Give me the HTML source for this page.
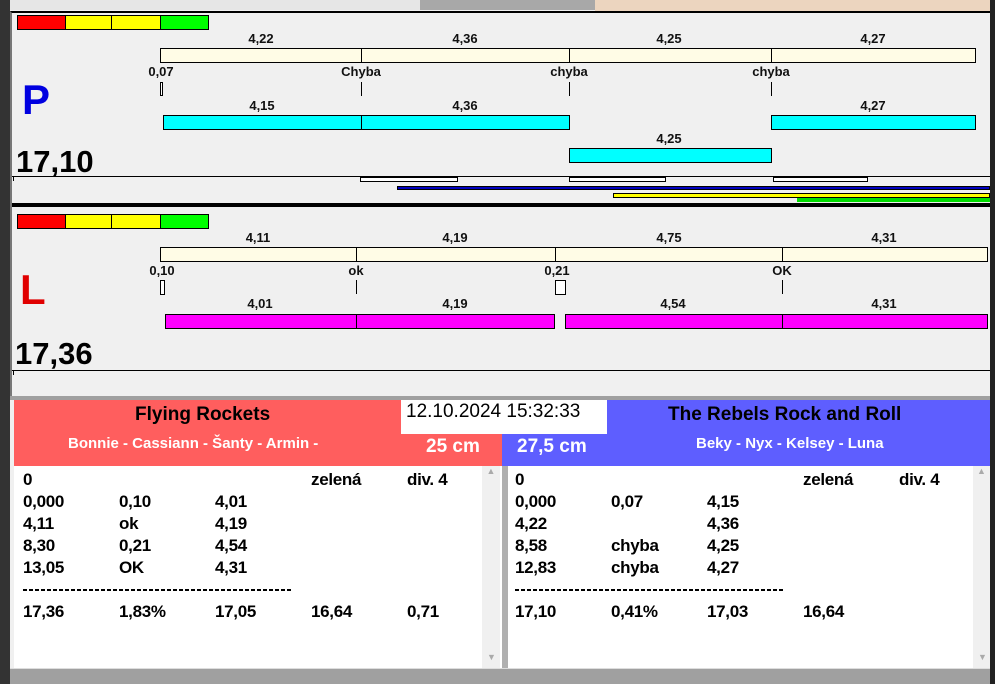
<!DOCTYPE html><html><head><style>
body{margin:0;width:995px;height:684px;overflow:hidden;background:#f0f0f0;font-family:"Liberation Sans",Arial,sans-serif;position:relative}
div{position:absolute;box-sizing:border-box}
.t{font-weight:bold;font-size:13px;color:#111;transform:translateX(-50%);white-space:nowrap}
.cr{background:#fffce6;border:1px solid #000;height:15px}
.cy{background:#00ffff;border:1px solid #000;height:15px}
.mg{background:#ff00ff;border:1px solid #000;height:15px}
.vl{width:1px;background:#000}
.r{font-weight:bold;font-size:17px;color:#000;white-space:nowrap;letter-spacing:-0.3px}
.dash{height:2px;background:repeating-linear-gradient(90deg,#000 0 4px,transparent 4px 6px)}
</style></head><body>
<div style="left:0;top:0;width:595px;height:10px;background:#a8a8a8"></div>
<div style="left:0;top:0;width:420px;height:10px;background:#e6e6e6"></div>
<div style="left:595px;top:0;width:395px;height:11px;background:#ecd5bf"></div>
<div style="left:990px;top:0;width:5px;height:684px;background:#222"></div>
<div style="left:0;top:0;width:10px;height:684px;background:#333"></div>
<div style="left:10px;top:11px;width:980px;height:389px;background:#f0f0f0;border-top:2px solid #000;border-left:2px solid #777"></div>
<!-- P panel -->
<div style="left:17px;top:15px;width:49px;height:15px;background:#f00;border:1px solid #000"></div>
<div style="left:65px;top:15px;width:47px;height:15px;background:#ff0;border:1px solid #000"></div>
<div style="left:111px;top:15px;width:50px;height:15px;background:#ff0;border:1px solid #000"></div>
<div style="left:160px;top:15px;width:49px;height:15px;background:#0f0;border:1px solid #000"></div>
<div class="t" style="left:261px;top:31px">4,22</div><div class="t" style="left:465px;top:31px">4,36</div><div class="t" style="left:669px;top:31px">4,25</div><div class="t" style="left:873px;top:31px">4,27</div>
<div class="cr" style="left:160px;top:48px;width:816px"></div>
<div class="vl" style="left:361px;top:48px;height:15px"></div><div class="vl" style="left:569px;top:48px;height:15px"></div><div class="vl" style="left:771px;top:48px;height:15px"></div>
<div class="t" style="left:161px;top:64px">0,07</div><div class="t" style="left:361px;top:64px">Chyba</div><div class="t" style="left:569px;top:64px">chyba</div><div class="t" style="left:771px;top:64px">chyba</div>
<div style="left:160px;top:82px;width:3px;height:14px;border:1px solid #000;background:#fff"></div>
<div class="vl" style="left:361px;top:82px;height:14px"></div><div class="vl" style="left:569px;top:82px;height:14px"></div><div class="vl" style="left:771px;top:82px;height:14px"></div>
<div style="left:22px;top:76px;font-size:42px;font-weight:bold;color:#0000e0">P</div>
<div class="t" style="left:262px;top:98px">4,15</div><div class="t" style="left:465px;top:98px">4,36</div><div class="t" style="left:873px;top:98px">4,27</div>
<div class="cy" style="left:163px;top:115px;width:407px"></div><div class="vl" style="left:361px;top:115px;height:15px"></div>
<div class="cy" style="left:771px;top:115px;width:205px"></div>
<div class="t" style="left:669px;top:131px">4,25</div>
<div class="cy" style="left:569px;top:148px;width:203px"></div>
<div style="left:16px;top:143px;font-size:31px;font-weight:bold;color:#000;line-height:38px">17,10</div>
<div style="left:12px;top:176px;width:978px;height:1px;background:#000"></div>
<div style="left:13px;top:176px;width:1px;height:5px;background:#000"></div>
<div style="left:360px;top:177px;width:98px;height:5px;border:1px solid #000;background:#fff"></div>
<div style="left:569px;top:177px;width:97px;height:5px;border:1px solid #000;background:#fff"></div>
<div style="left:773px;top:177px;width:95px;height:5px;border:1px solid #000;background:#fff"></div>
<div style="left:397px;top:186px;width:593px;height:4px;background:#0000c0;border:1px solid #000"></div>
<div style="left:613px;top:193px;width:377px;height:5px;background:#ff0;border:1px solid #000"></div>
<div style="left:797px;top:198px;width:193px;height:4px;background:#0d0"></div>
<div style="left:12px;top:203px;width:978px;height:4px;background:#000"></div>
<!-- L panel -->
<div style="left:17px;top:214px;width:49px;height:15px;background:#f00;border:1px solid #000"></div>
<div style="left:65px;top:214px;width:47px;height:15px;background:#ff0;border:1px solid #000"></div>
<div style="left:111px;top:214px;width:50px;height:15px;background:#ff0;border:1px solid #000"></div>
<div style="left:160px;top:214px;width:49px;height:15px;background:#0f0;border:1px solid #000"></div>
<div class="t" style="left:258px;top:230px">4,11</div><div class="t" style="left:455px;top:230px">4,19</div><div class="t" style="left:669px;top:230px">4,75</div><div class="t" style="left:884px;top:230px">4,31</div>
<div class="cr" style="left:160px;top:247px;width:828px"></div>
<div class="vl" style="left:356px;top:247px;height:15px"></div><div class="vl" style="left:555px;top:247px;height:15px"></div><div class="vl" style="left:782px;top:247px;height:15px"></div>
<div class="t" style="left:162px;top:263px">0,10</div><div class="t" style="left:356px;top:263px">ok</div><div class="t" style="left:557px;top:263px">0,21</div><div class="t" style="left:782px;top:263px">OK</div>
<div style="left:160px;top:280px;width:5px;height:15px;border:1px solid #000;background:#fff"></div>
<div class="vl" style="left:356px;top:280px;height:14px"></div>
<div style="left:555px;top:280px;width:11px;height:15px;border:1px solid #000;background:#fff"></div>
<div class="vl" style="left:782px;top:280px;height:14px"></div>
<div style="left:20px;top:266px;font-size:42px;font-weight:bold;color:#e00000">L</div>
<div class="t" style="left:260px;top:296px">4,01</div><div class="t" style="left:455px;top:296px">4,19</div><div class="t" style="left:673px;top:296px">4,54</div><div class="t" style="left:884px;top:296px">4,31</div>
<div class="mg" style="left:165px;top:314px;width:390px"></div><div class="vl" style="left:356px;top:314px;height:15px"></div>
<div class="mg" style="left:565px;top:314px;width:423px"></div><div class="vl" style="left:782px;top:314px;height:15px"></div>
<div style="left:15px;top:335px;font-size:31px;font-weight:bold;color:#000;line-height:38px">17,36</div>
<div style="left:12px;top:370px;width:978px;height:1px;background:#000"></div>
<div style="left:13px;top:370px;width:1px;height:5px;background:#000"></div>
<div style="left:10px;top:396px;width:980px;height:4px;background:#a0a0a0"></div>
<!-- bottom -->
<div style="left:14px;top:400px;width:488px;height:66px;background:#ff5e5e"></div>
<div style="left:502px;top:400px;width:488px;height:66px;background:#5e5eff"></div>
<div style="left:135px;top:404px;font-size:19px;font-weight:bold;color:#000">Flying Rockets</div>
<div style="left:68px;top:435px;font-size:15px;font-weight:bold;color:#fff">Bonnie - Cassiann - Šanty - Armin -</div>
<div style="left:426px;top:436px;font-size:19px;font-weight:bold;color:#fff">25 cm</div>
<div style="left:401px;top:400px;width:206px;height:34px;background:#fff"></div>
<div style="left:406px;top:401px;font-size:19px;color:#000">12.10.2024 15:32:33</div>
<div style="left:668px;top:404px;font-size:19px;font-weight:bold;color:#000">The Rebels Rock and Roll</div>
<div style="left:696px;top:435px;font-size:15px;font-weight:bold;color:#fff">Beky - Nyx - Kelsey - Luna</div>
<div style="left:517px;top:436px;font-size:19px;font-weight:bold;color:#fff">27,5 cm</div>
<div style="left:14px;top:466px;width:488px;height:202px;background:#fff"></div>
<div style="left:482px;top:466px;width:18px;height:202px;background:#f0f0f0;color:#aaa;font-size:9px;text-align:center">▲<div style="top:186px;left:5px">▼</div></div>
<div style="left:502px;top:466px;width:6px;height:202px;background:#b0b0b0"></div>
<div style="left:508px;top:466px;width:482px;height:202px;background:#fff"></div>
<div style="left:973px;top:466px;width:17px;height:202px;background:#f0f0f0;color:#aaa;font-size:9px;text-align:center">▲<div style="top:186px;left:5px">▼</div></div>
<div style="left:10px;top:668px;width:980px;height:16px;background:#a0a0a0;border-top:1px solid #ddd"></div>
<!-- left list -->
<div class="r" style="left:23px;top:470px">0</div><div class="r" style="left:311px;top:470px">zelená</div><div class="r" style="left:407px;top:470px">div. 4</div>
<div class="r" style="left:23px;top:492px">0,000</div><div class="r" style="left:119px;top:492px">0,10</div><div class="r" style="left:215px;top:492px">4,01</div>
<div class="r" style="left:23px;top:514px">4,11</div><div class="r" style="left:119px;top:514px">ok</div><div class="r" style="left:215px;top:514px">4,19</div>
<div class="r" style="left:23px;top:536px">8,30</div><div class="r" style="left:119px;top:536px">0,21</div><div class="r" style="left:215px;top:536px">4,54</div>
<div class="r" style="left:23px;top:558px">13,05</div><div class="r" style="left:119px;top:558px">OK</div><div class="r" style="left:215px;top:558px">4,31</div>
<div class="dash" style="left:23px;top:589px;width:270px"></div>
<div class="r" style="left:23px;top:602px">17,36</div><div class="r" style="left:119px;top:602px">1,83%</div><div class="r" style="left:215px;top:602px">17,05</div><div class="r" style="left:311px;top:602px">16,64</div><div class="r" style="left:407px;top:602px">0,71</div>
<!-- right list -->
<div class="r" style="left:515px;top:470px">0</div><div class="r" style="left:803px;top:470px">zelená</div><div class="r" style="left:899px;top:470px">div. 4</div>
<div class="r" style="left:515px;top:492px">0,000</div><div class="r" style="left:611px;top:492px">0,07</div><div class="r" style="left:707px;top:492px">4,15</div>
<div class="r" style="left:515px;top:514px">4,22</div><div class="r" style="left:707px;top:514px">4,36</div>
<div class="r" style="left:515px;top:536px">8,58</div><div class="r" style="left:611px;top:536px">chyba</div><div class="r" style="left:707px;top:536px">4,25</div>
<div class="r" style="left:515px;top:558px">12,83</div><div class="r" style="left:611px;top:558px">chyba</div><div class="r" style="left:707px;top:558px">4,27</div>
<div class="dash" style="left:515px;top:589px;width:270px"></div>
<div class="r" style="left:515px;top:602px">17,10</div><div class="r" style="left:611px;top:602px">0,41%</div><div class="r" style="left:707px;top:602px">17,03</div><div class="r" style="left:803px;top:602px">16,64</div>
</body></html>
